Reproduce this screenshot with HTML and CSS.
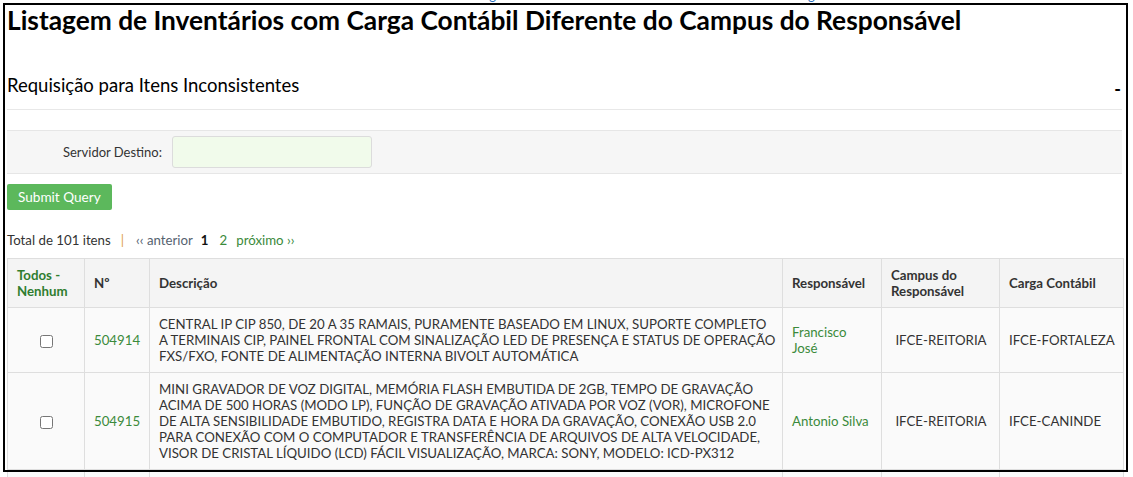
FILE: index.html
```html
<!DOCTYPE html>
<html lang="pt-BR">
<head>
<meta charset="utf-8">
<title>Listagem de Inventários</title>
<link rel="stylesheet" href="styles.css">
</head>
<body>
<div class="topline"><div class="crumbs">Início » Patrimônio » Inventários » Listagem de Inventários com Carga Contábil Diferente do Campus do Responsável » página principal</div></div>
<div class="page">
  <div class="frame"></div>
  <h1 class="title">Listagem de Inventários com Carga Contábil Diferente do Campus do Responsável</h1>
  <div class="box-head">
    <h2 class="subtitle">Requisição para Itens Inconsistentes</h2>
    <span class="toggle">-</span>
  </div>
  <div class="box-body">
    <form class="form">
      <div class="field-row">
        <label class="field-label" for="servidor">Servidor Destino:</label>
        <input class="field-input" id="servidor" type="text">
      </div>
      <div class="actions"><button type="button" class="btn">Submit Query</button></div>
    </form>
    <div class="pager">
      <span>Total de 101 itens</span>
      <span class="sep">|</span>
      <span class="prev">‹‹ anterior</span>
      <span class="cur">1</span>
      <a class="link">2</a>
      <a class="link">próximo ››</a>
    </div>
    <table class="grid">
      <colgroup>
        <col class="c1"><col class="c2"><col class="c3"><col class="c4"><col class="c5"><col class="c6">
      </colgroup>
      <thead>
        <tr>
          <th class="sel"><a class="link">Todos -<br>Nenhum</a></th>
          <th>Nº</th>
          <th>Descrição</th>
          <th>Responsável</th>
          <th>Campus do<br>Responsável</th>
          <th>Carga Contábil</th>
        </tr>
      </thead>
      <tbody>
        <tr>
          <td class="center"><input type="checkbox" class="chk"></td>
          <td><a class="link">504914</a></td>
          <td class="desc">CENTRAL IP CIP 850, DE 20 A 35 RAMAIS, PURAMENTE BASEADO EM LINUX, SUPORTE COMPLETO<br>A TERMINAIS CIP, PAINEL FRONTAL COM SINALIZAÇÃO LED DE PRESENÇA E STATUS DE OPERAÇÃO FXS/FXO, FONTE DE ALIMENTAÇÃO INTERNA BIVOLT AUTOMÁTICA</td>
          <td><a class="link">Francisco<br>José</a></td>
          <td class="center">IFCE-REITORIA</td>
          <td>IFCE-FORTALEZA</td>
        </tr>
        <tr>
          <td class="center"><input type="checkbox" class="chk"></td>
          <td><a class="link">504915</a></td>
          <td class="desc">MINI GRAVADOR DE VOZ DIGITAL, MEMÓRIA FLASH EMBUTIDA DE 2GB, TEMPO DE GRAVAÇÃO ACIMA DE 500 HORAS (MODO LP), FUNÇÃO DE GRAVAÇÃO ATIVADA POR VOZ (VOR), MICROFONE DE ALTA SENSIBILIDADE EMBUTIDO, REGISTRA DATA E HORA DA GRAVAÇÃO, CONEXÃO USB 2.0 PARA CONEXÃO COM O COMPUTADOR E TRANSFERÊNCIA DE ARQUIVOS DE ALTA VELOCIDADE, VISOR DE CRISTAL LÍQUIDO (LCD) FÁCIL VISUALIZAÇÃO, MARCA: SONY, MODELO: ICD-PX312</td>
          <td><a class="link">Antonio Silva</a></td>
          <td class="center">IFCE-REITORIA</td>
          <td>IFCE-CANINDE</td>
        </tr>
        <tr>
          <td class="center"><input type="checkbox" class="chk"></td>
          <td><a class="link">504916</a></td>
          <td class="desc">TELEFONE IP</td>
          <td><a class="link">Maria</a></td>
          <td class="center">IFCE-REITORIA</td>
          <td>IFCE-CRATO</td>
        </tr>
      </tbody>
    </table>
  </div>
</div>
</body>
</html>
```

FILE: styles.css
```css
html, body {
  margin: 0;
  padding: 0;
  background: #fff;
  overflow: hidden;
}
body {
  font-family: Lato, "Open Sans", "Liberation Sans", sans-serif;
  color: #333;
  font-size: 13px;
  height: 477px;
}
.topline {
  height: 3px;
  overflow: hidden;
}
.crumbs {
  margin-top: -12px;
  padding-left: 30px;
  font-size: 13px;
  line-height: 14px;
  color: #2a6ebb;
  white-space: nowrap;
  word-spacing: 40px;
}
.page {
  position: relative;
  padding: 2px 11px 0 7px;
}
.frame {
  position: absolute;
  left: 3px;
  top: 0;
  width: 1121px;
  height: 465px;
  border: 2px solid #000;
  pointer-events: none;
  z-index: 2;
}
.title {
  margin: 0;
  font-size: 26.3px;
  font-weight: 700;
  line-height: 30px;
  color: #000;
}
.box-head {
  display: flex;
  align-items: flex-end;
  justify-content: space-between;
  margin-top: 39px;
  padding-bottom: 13px;
  border-bottom: 1px solid #e8e8e8;
}
.subtitle {
  margin: 0;
  font-size: 18.5px;
  font-weight: 400;
  line-height: 22px;
  color: #000;
}
.toggle {
  font-size: 18px;
  font-weight: 700;
  line-height: 22px;
  color: #000;
  margin-right: 1px;
  margin-bottom: -4px;
}
.form {
  margin-top: 20px;
}
.field-row {
  display: flex;
  align-items: center;
  gap: 10px;
  height: 42px;
  background: #f6f6f6;
  border-top: 1px solid #e6e6e6;
  border-bottom: 1px solid #e6e6e6;
}
.field-label {
  width: 155px;
  text-align: right;
  font-size: 13px;
  color: #333;
}
.field-input {
  box-sizing: border-box;
  width: 200px;
  height: 32px;
  margin: 0;
  border: 1px solid #dcdcdc;
  border-radius: 3px;
  background: #f1fbeb;
  outline: none;
}
.actions {
  margin-top: 10px;
}
.btn {
  display: block;
  height: 26px;
  padding: 0 11px;
  border: 0;
  border-radius: 2px;
  background: #5cb85c;
  color: #fff;
  font-family: Lato, "Open Sans", "Liberation Sans", sans-serif;
  font-size: 13.6px;
  line-height: 26px;
}
.pager {
  margin-top: 22px;
  line-height: 16px;
  font-size: 13.25px;
  display: flex;
}
.pager > * {
  margin-right: 9px;
}
.sep {
  color: #e0a050;
  margin-left: 1px;
  margin-right: 12px;
}
.prev {
  color: #556270;
  margin-right: 8px;
}
.cur {
  font-weight: 700;
  color: #111;
  margin-right: 11px;
}
.link {
  color: #3b8a3b;
  text-decoration: none;
}
.grid {
  margin-top: 10px;
  width: 1116px;
  border-collapse: collapse;
  table-layout: fixed;
  font-size: 13.25px;
  line-height: 16px;
}
.c1 { width: 77px; }
.c2 { width: 65px; }
.c3 { width: 633px; }
.c4 { width: 99px; }
.c5 { width: 118px; }
.c6 { width: 124px; }
.grid th, .grid td {
  border: 1px solid #dedede;
  padding: 8px 8px 8px 9px;
  vertical-align: middle;
  text-align: left;
}
.grid td.desc {
  padding-right: 3px;
}
.grid th {
  background: #f4f4f4;
  font-weight: 700;
  color: #333;
}
.grid th .link {
  font-weight: 700;
  color: #2f7d2f;
}
.grid td {
  background: #fafafa;
}
.grid td.center {
  text-align: center;
}
.chk {
  margin: 0;
  width: 13px;
  height: 13px;
  vertical-align: middle;
}
```
